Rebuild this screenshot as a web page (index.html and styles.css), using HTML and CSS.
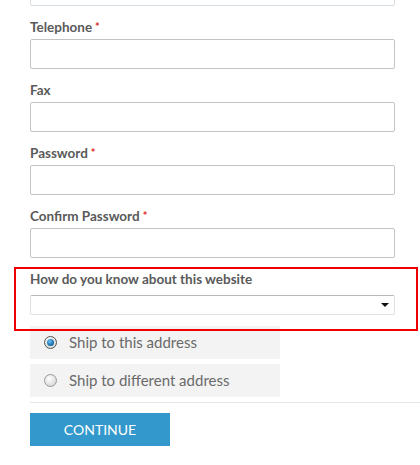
FILE: index.html
```html
<!DOCTYPE html>
<html>
<head>
<meta charset="utf-8">
<link rel="stylesheet" href="styles.css">
</head>
<body>
<div class="page">
  <div class="form">
    <div class="input top-input"><span class="value">France</span></div>

    <div class="field">
      <label class="label">Telephone<span class="req">*</span></label>
      <div class="input"></div>
    </div>
    <div class="field">
      <label class="label">Fax</label>
      <div class="input"></div>
    </div>
    <div class="field">
      <label class="label">Password<span class="req">*</span></label>
      <div class="input"></div>
    </div>
    <div class="field">
      <label class="label">Confirm Password<span class="req">*</span></label>
      <div class="input"></div>
    </div>
    <div class="field field-select">
      <label class="label">How do you know about this website</label>
      <div class="select"><span class="arrow"></span></div>
    </div>

    <div class="options">
      <div class="option"><span class="radio checked"></span><span class="opt-text">Ship to this address</span></div>
      <div class="option"><span class="radio"></span><span class="opt-text">Ship to different address</span></div>
    </div>
  </div>
  <div class="separator"></div>
  <div class="actions">
    <button class="btn">CONTINUE</button>
  </div>
  <div class="highlight"></div>
</div>
</body>
</html>
```
FILE: styles.css
```css
html, body {
  margin: 0;
  padding: 0;
  background: #fff;
}
body {
  font-family: "Lato", "Open Sans", sans-serif;
  overflow: hidden;
}
.page {
  position: relative;
  display: flow-root;
  height: 465px;
}
.form {
  padding-left: 30px;
  width: 365px;
}
.input {
  box-sizing: border-box;
  height: 30px;
  border: 1px solid #c4c4c4;
  border-radius: 2px;
  background: #fff;
}
.top-input {
  margin-top: -24px;
  border-color: #d6dde3;
  padding: 6px 10px;
  font-size: 13px;
  color: #555;
  line-height: 22px;
}
.field {
  margin-top: 12px;
}
.label {
  display: block;
  height: 18px;
  line-height: 18px;
  font-size: 13.5px;
  font-weight: 700;
  color: #5a5a5a;
  margin-bottom: 3px;
}
.req {
  color: #e02b27;
  font-size: 11px;
  margin-left: 3px;
  vertical-align: top;
}
.field-select {
  margin-top: 12px;
}
.field-select .label {
  margin-bottom: 7px;
}
.select {
  box-sizing: border-box;
  height: 20px;
  border: 1px solid #dde1e4;
  border-top-color: #b8b8b8;
  border-radius: 2px;
  display: flex;
  align-items: center;
  justify-content: flex-end;
  padding-right: 5px;
}
.arrow {
  width: 0;
  height: 0;
  border-left: 4px solid transparent;
  border-right: 4px solid transparent;
  border-top: 4px solid #111;
}
.options {
  margin-top: 11px;
  display: flex;
  flex-direction: column;
  gap: 5px;
  width: 250px;
}
.option {
  height: 33px;
  background: #f3f3f3;
  display: flex;
  align-items: center;
  padding-left: 14px;
}
.radio {
  box-sizing: border-box;
  width: 13px;
  height: 13px;
  border-radius: 50%;
  border: 1px solid #9a9a9a;
  background: radial-gradient(circle at 40% 35%, #fff 0%, #e4e4e4 55%, #c8c8c8 100%);
  position: relative;
  flex: none;
}
.radio.checked {
  border-color: #555;
}
.radio.checked::after {
  content: "";
  position: absolute;
  left: 2px;
  top: 2px;
  width: 7px;
  height: 7px;
  border-radius: 50%;
  background: radial-gradient(circle at 40% 35%, #6fc3f2 0%, #1a6fb0 60%, #0b3d6b 100%);
}
.opt-text {
  margin-left: 12px;
  font-size: 15px;
  line-height: 18px;
  margin-top: -2px;
  color: #6a6a6a;
}
.separator {
  margin-top: 5px;
  margin-left: 30px;
  height: 1px;
  background: #e6e6e6;
}
.actions {
  padding-left: 30px;
  margin-top: 10px;
}
.btn {
  width: 140px;
  height: 33px;
  border: none;
  background: #3399cc;
  color: #fff;
  font-family: "Lato", "Open Sans", sans-serif;
  font-size: 14px;
  line-height: 33px;
  padding: 0 0 2px;
}
.highlight {
  position: absolute;
  left: 14px;
  top: 267px;
  width: 404px;
  height: 64px;
  box-sizing: border-box;
  border: 2px solid #ee0000;
  pointer-events: none;
}
```
